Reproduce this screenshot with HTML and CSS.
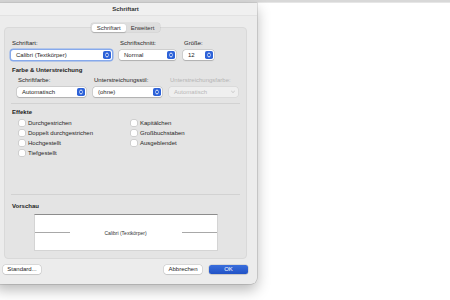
FILE: index.html
```html
<!DOCTYPE html>
<html lang="de">
<head>
<meta charset="utf-8">
<title>Schriftart</title>
<link rel="stylesheet" href="styles.css">
</head>
<body>
<div class="topbar"></div>
<div class="document"></div>
<div class="dialog">
  <div class="titlebar">Schriftart</div>
  <div class="tabs">
    <span class="tab active">Schriftart</span>
    <span class="tab">Erweitert</span>
  </div>
  <div class="panel">
    <div class="row row-font">
      <div class="field w-font">
        <div class="label">Schriftart:</div>
        <div class="select focus"><span>Calibri (Textkörper)</span><svg class="chev" viewBox="0 0 8 8"><rect width="8" height="8" rx="1.8" fill="#2d62d8"/><path d="M2.5 3.2 4 1.8 5.5 3.2M2.5 4.8 4 6.2 5.5 4.8" fill="none" stroke="#fff" stroke-width=".9" stroke-linecap="round" stroke-linejoin="round"/></svg></div>
      </div>
      <div class="field w-style">
        <div class="label">Schriftschnitt:</div>
        <div class="select"><span>Normal</span><svg class="chev" viewBox="0 0 8 8"><rect width="8" height="8" rx="1.8" fill="#2d62d8"/><path d="M2.5 3.2 4 1.8 5.5 3.2M2.5 4.8 4 6.2 5.5 4.8" fill="none" stroke="#fff" stroke-width=".9" stroke-linecap="round" stroke-linejoin="round"/></svg></div>
      </div>
      <div class="field w-size">
        <div class="label">Größe:</div>
        <div class="select"><span>12</span><svg class="chev" viewBox="0 0 8 8"><rect width="8" height="8" rx="1.8" fill="#2d62d8"/><path d="M2.5 3.2 4 1.8 5.5 3.2M2.5 4.8 4 6.2 5.5 4.8" fill="none" stroke="#fff" stroke-width=".9" stroke-linecap="round" stroke-linejoin="round"/></svg></div>
      </div>
    </div>

    <div class="section-title first">Farbe &amp; Unterstreichung</div>
    <div class="row row-color">
      <div class="field w-color">
        <div class="label">Schriftfarbe:</div>
        <div class="select"><span>Automatisch</span><svg class="chev" viewBox="0 0 8 8"><rect width="8" height="8" rx="1.8" fill="#2d62d8"/><path d="M2.5 3.2 4 1.8 5.5 3.2M2.5 4.8 4 6.2 5.5 4.8" fill="none" stroke="#fff" stroke-width=".9" stroke-linecap="round" stroke-linejoin="round"/></svg></div>
      </div>
      <div class="field w-ustyle">
        <div class="label">Unterstreichungsstil:</div>
        <div class="select"><span>(ohne)</span><svg class="chev" viewBox="0 0 8 8"><rect width="8" height="8" rx="1.8" fill="#2d62d8"/><path d="M2.5 3.2 4 1.8 5.5 3.2M2.5 4.8 4 6.2 5.5 4.8" fill="none" stroke="#fff" stroke-width=".9" stroke-linecap="round" stroke-linejoin="round"/></svg></div>
      </div>
      <div class="field w-ucolor disabled">
        <div class="label">Unterstreichungsfarbe:</div>
        <div class="select"><span>Automatisch</span><svg class="chev" viewBox="0 0 8 8"><path d="M2.5 3.2 4 4.6 5.5 3.2" fill="none" stroke="#c4c4c4" stroke-width=".9" stroke-linecap="round" stroke-linejoin="round"/></svg></div>
      </div>
    </div>

    <div class="sep sep-1"></div>

    <div class="section-title">Effekte</div>
    <div class="effects">
      <div class="col col-1">
        <div class="check"><span class="box"></span>Durchgestrichen</div>
        <div class="check"><span class="box"></span>Doppelt durchgestrichen</div>
        <div class="check"><span class="box"></span>Hochgestellt</div>
        <div class="check"><span class="box"></span>Tiefgestellt</div>
      </div>
      <div class="col">
        <div class="check"><span class="box"></span>Kapitälchen</div>
        <div class="check"><span class="box"></span>Großbuchstaben</div>
        <div class="check"><span class="box"></span>Ausgeblendet</div>
      </div>
    </div>

    <div class="sep sep-2"></div>

    <div class="section-title">Vorschau</div>
    <div class="preview">
      <div class="pline"></div>
      <div class="ptext">Calibri (Textkörper)</div>
      <div class="pline"></div>
    </div>
  </div>

  <div class="buttons">
    <button class="btn">Standard...</button>
    <div class="spacer"></div>
    <button class="btn">Abbrechen</button>
    <button class="btn primary">OK</button>
  </div>
</div>
</body>
</html>
```

FILE: styles.css
```css
* { box-sizing: border-box; }

html, body {
  margin: 0;
  padding: 0;
  width: 450px;
  height: 300px;
  overflow: hidden;
  background: #ffffff;
  font-family: "Liberation Sans", Arial, sans-serif;
  font-size: 6px;
  color: #262626;
}

.topbar {
  height: 3px;
  background: #d8d8d8;
  border-bottom: 1px solid #e6e6e6;
}

.document {
  height: 296px;
  background: #ffffff;
}

.dialog {
  position: absolute;
  top: 3px;
  left: -6px;
  width: 263px;
  display: flex;
  flex-direction: column;
  background: #ececec;
  border-radius: 0 0 6px 6px;
  box-shadow: 0 0 0 0.5px rgba(0, 0, 0, 0.22), 0 6px 14px rgba(0, 0, 0, 0.28);
  padding-bottom: 10px;
}

.titlebar {
  height: 13px;
  line-height: 13px;
  text-align: center;
  font-weight: bold;
  color: #333;
  background: #f0f0f0;
  border-bottom: 1px solid #e2e2e2;
}

.tabs {
  position: relative;
  z-index: 1;
  align-self: center;
  display: flex;
  margin-top: 7px;
  margin-bottom: -5px;
  height: 9px;
  padding: 0.5px;
  background: #dedede;
  border-radius: 2.5px;
  box-shadow: 0 0 0 0.5px rgba(0, 0, 0, 0.1);
}

.tab {
  height: 8px;
  line-height: 8px;
  padding: 0 5px;
  color: #333;
  border-radius: 2px;
}

.tab.active {
  background: #ffffff;
  box-shadow: 0 0.5px 1px rgba(0, 0, 0, 0.2);
}

.panel {
  margin: 0 10px;
  padding: 11px 6px 7px;
  background: #e4e4e4;
  border: 1px solid #d9d9d9;
  border-radius: 4px;
}

.row {
  display: flex;
}

.row-font { gap: 7px; }
.row-color { gap: 7px; padding-left: 6px; }

.field { display: flex; flex-direction: column; }
.w-font { width: 101px; }
.w-style { width: 57px; }
.w-size { width: 31px; }
.w-color { width: 69px; }
.w-ustyle { width: 69px; }
.w-ucolor { width: 69px; }

.label {
  height: 8px;
  line-height: 8px;
  padding-left: 1px;
  margin-bottom: 3px;
  white-space: nowrap;
}

.select {
  position: relative;
  height: 10px;
  line-height: 10px;
  padding-left: 5px;
  background: #ffffff;
  border-radius: 2.5px;
  box-shadow: 0 0 0 0.5px rgba(0, 0, 0, 0.16), 0 0.5px 1px rgba(0, 0, 0, 0.16);
  display: flex;
  align-items: center;
  justify-content: space-between;
  padding-right: 1px;
  white-space: nowrap;
}

.select.focus {
  box-shadow: 0 0 0 1.5px #86a9ec, 0 0.5px 1px rgba(0, 0, 0, 0.16);
}

.chev {
  width: 8px;
  height: 8px;
  flex: none;
}

.disabled .label { color: #b4b4b4; }
.disabled .select {
  background: #efefef;
  color: #b8b8b8;
  box-shadow: 0 0 0 0.5px rgba(0, 0, 0, 0.08);
}

.section-title {
  height: 8px;
  line-height: 8px;
  padding-left: 1px;
  font-weight: bold;
  color: #222;
}

.section-title.first { margin-top: 6px; margin-bottom: 2px; }

.sep {
  height: 1px;
  background: #d2d2d2;
}

.sep-1 { margin-top: 6px; margin-bottom: 4px; }
.sep-2 { margin-top: 36px; margin-bottom: 7px; }

.effects {
  display: flex;
  margin-top: 2px;
  padding-left: 8px;
}

.col-1 { width: 112px; }

.check {
  height: 10px;
  display: flex;
  align-items: center;
  gap: 2px;
  white-space: nowrap;
}

.box {
  width: 6px;
  height: 6px;
  background: #ffffff;
  border-radius: 1.5px;
  box-shadow: 0 0 0 0.5px rgba(0, 0, 0, 0.18);
  margin-right: 1px;
}

.preview {
  margin: 4px auto 0;
  width: 184px;
  height: 37px;
  background: #ffffff;
  border: 1px solid #d4d4d4;
  border-top-color: #8c8c8c;
  display: grid;
  grid-template-columns: 35px 1fr 35px;
  align-items: center;
}

.pline {
  height: 1px;
  background: #a8a8a8;
}

.ptext {
  text-align: center;
  font-size: 5px;
  color: #333;
}

.buttons {
  display: flex;
  gap: 7px;
  margin-top: 6px;
  padding: 0 9px;
}

.spacer { flex: 1; }

.btn {
  font-family: inherit;
  font-size: 6px;
  height: 9px;
  line-height: 9px;
  padding: 0;
  border: none;
  border-radius: 2.5px;
  background: #ffffff;
  color: #262626;
  box-shadow: 0 0 0 0.5px rgba(0, 0, 0, 0.15), 0 0.5px 1px rgba(0, 0, 0, 0.15);
  width: 38px;
}

.btn.primary {
  width: 39px;
  color: #ffffff;
  background: linear-gradient(#3a6edc, #2152c6);
}
```
